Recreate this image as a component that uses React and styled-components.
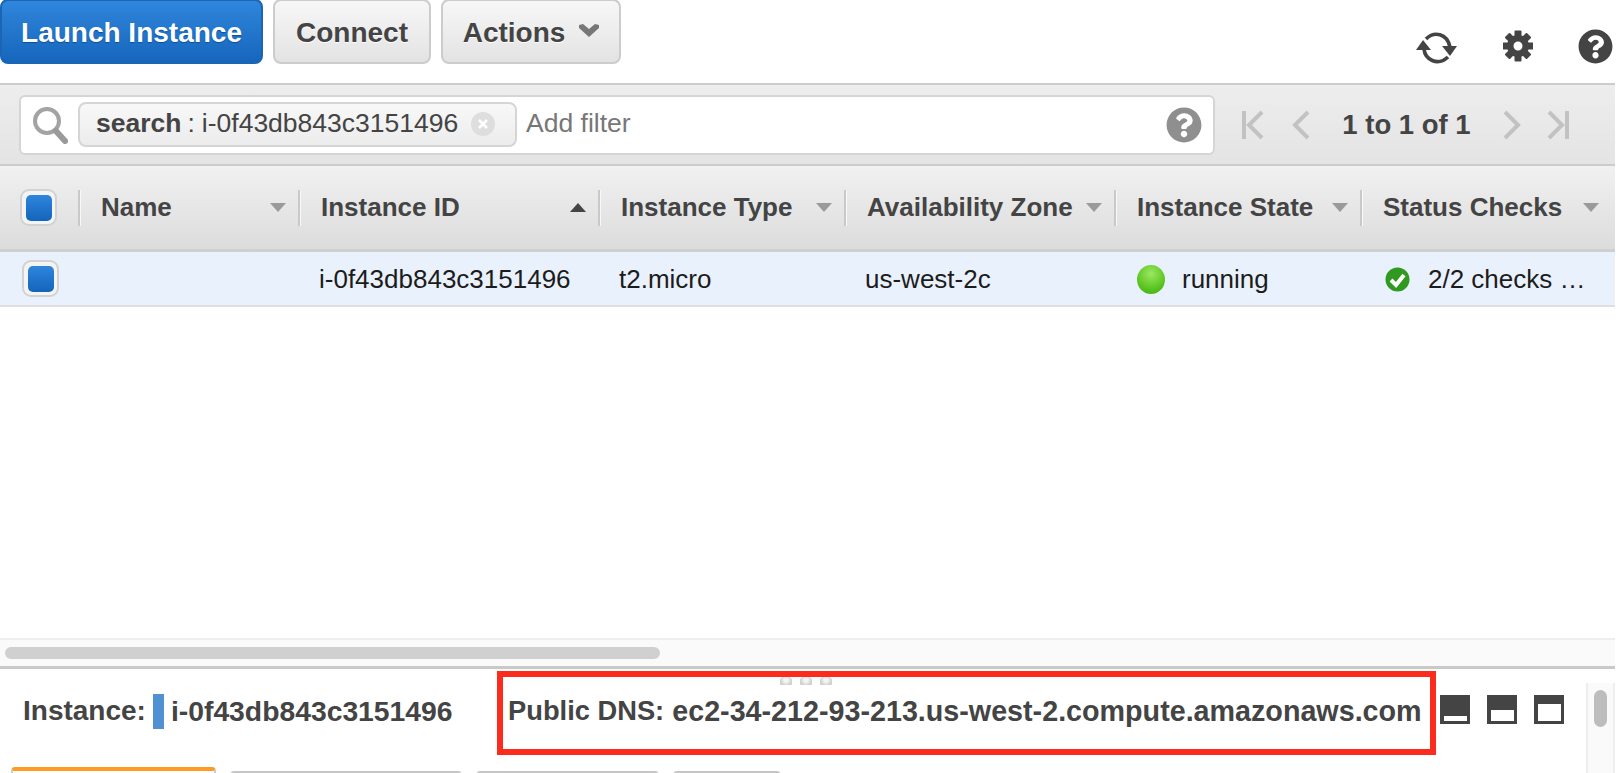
import React from 'react';
import styled, { createGlobalStyle } from 'styled-components';
import { FaQuestionCircle } from 'react-icons/fa';

const Global = createGlobalStyle`
  html, body {
    margin: 0;
    background: #fff;
    overflow: hidden;
    font-family: "Liberation Sans", Arial, sans-serif;
  }
  * { box-sizing: border-box; }
`;

const Page = styled.div`
  width: 1615px;
  height: 773px;
  display: flex;
  flex-direction: column;
  overflow: hidden;
  position: relative;
`;

const TopBar = styled.div`
  height: 83px;
  flex: none;
  display: flex;
  align-items: flex-start;
  gap: 10px;
`;

const Button = styled.div`
  height: 65px;
  width: ${p => p.$w}px;
  margin-top: -1px;
  padding-top: 2px;
  display: flex;
  align-items: center;
  justify-content: center;
  gap: 14px;
  border-radius: 8px;
  font-size: 28px;
  font-weight: 700;
  color: ${p => (p.$primary ? '#fff' : '#444')};
  text-shadow: ${p => (p.$primary ? '0 1px 1px #0d4f96' : '0 1px 0 #fff')};
  border: 2px solid ${p => (p.$primary ? '#1a66b5' : '#ccc')};
  background: ${p => (p.$primary ? 'linear-gradient(#2f86dc, #1666bc)' : 'linear-gradient(#f7f7f7, #e3e3e3)')};
`;

const Chevron = styled.svg`
  width: 20px;
  height: 13px;
  margin-bottom: 5px;
`;

const TopIcons = styled.div`
  margin-left: auto;
  margin-top: 30px;
  margin-right: 2px;
  display: flex;
  align-items: flex-start;
  color: #444;
`;

const TopIcon = styled.span`
  display: flex;
  margin-left: ${p => p.$gap || 0}px;
  margin-top: ${p => p.$top || 0}px;
`;

const FilterBar = styled.div`
  height: 83px;
  flex: none;
  display: flex;
  align-items: center;
  padding: 0 0 0 19px;
  border-top: 2px solid #ccc;
  border-bottom: 2px solid #ccc;
  background: linear-gradient(#ededed, #e4e4e4);
`;

const SearchBox = styled.div`
  width: 1196px;
  height: 60px;
  display: flex;
  align-items: center;
  padding: 0 11px 0 11px;
  background: #fff;
  border: 2px solid #d5d5d5;
  border-radius: 6px;
`;

const Chip = styled.div`
  height: 45px;
  width: 439px;
  margin-left: 10px;
  display: flex;
  align-items: center;
  padding: 0 20px 2px 16px;
  border: 2px solid #d5d5d5;
  border-radius: 8px;
  background: linear-gradient(#f8f8f8, #ececec);
  font-size: 26.5px;
  color: #444;
  white-space: nowrap;
`;

const ChipSep = styled.span`
  margin: 0 7px 0 6px;
`;

const ChipClose = styled.span`
  width: 24px;
  height: 24px;
  margin-left: auto;
  border-radius: 50%;
  background: #dedede;
  display: flex;
  align-items: center;
  justify-content: center;
`;

const AddFilter = styled.span`
  margin: 0 0 2px 9px;
  font-size: 26.5px;
  color: #777;
`;

const FilterHelp = styled.span`
  margin-left: auto;
  display: flex;
  color: #8f8f8f;
`;

const Pager = styled.div`
  display: flex;
  align-items: center;
  margin-left: 26px;
  color: #c2c2c2;
`;

const PagerText = styled.span`
  font-size: 27.5px;
  font-weight: 700;
  color: #444;
  width: 193px;
  text-align: center;
  white-space: nowrap;
`;

const PagerIcon = styled.svg`
  width: ${p => p.$w}px;
  height: 30px;
  margin-right: ${p => p.$mr || 0}px;
  fill: none;
  stroke: currentColor;
  stroke-width: 4;
`;

const columns = '78px 220px 300px 246px 270px 246px 251px';

const HeaderRow = styled.div`
  height: 86px;
  flex: none;
  display: grid;
  grid-template-columns: ${columns};
  border-bottom: 3px solid #cfcfcf;
  background: linear-gradient(#f1f1f1, #dcdcdc);
  align-items: center;
`;

const CheckCell = styled.div`
  height: 100%;
  display: flex;
  align-items: center;
  padding-left: ${p => p.$pl}px;
`;

const CheckBox = styled.span`
  width: 37px;
  height: 37px;
  display: flex;
  align-items: center;
  justify-content: center;
  border: 2px solid #d2d2d2;
  border-radius: 9px;
  background: #f4f4f4;
`;

const CheckFill = styled.span`
  width: 26px;
  height: 26px;
  border-radius: 5px;
  background: linear-gradient(#2f85dc, #1464bb);
`;

const HeadCell = styled.div`
  height: 36px;
  display: flex;
  align-items: center;
  justify-content: space-between;
  padding: 0 12px 0 21px;
  border-left: 2px solid #c9c9c9;
  box-shadow: inset 1px 0 0 #f8f8f8;
  font-size: 26px;
  font-weight: 700;
  color: #444;
  white-space: nowrap;
`;

const Caret = styled.span`
  width: 0;
  height: 0;
  border-left: 8px solid transparent;
  border-right: 8px solid transparent;
  ${p => (p.$up ? 'border-bottom: 9px solid #444;' : 'border-top: 9px solid #9a9a9a;')}
`;

const DataRow = styled.div`
  height: 55px;
  flex: none;
  display: grid;
  grid-template-columns: ${columns};
  align-items: center;
  background: #e9f1fc;
  border-bottom: 2px solid #dfdfdf;
`;

const Cell = styled.div`
  display: flex;
  align-items: center;
  min-width: 0;
  padding-left: ${p => p.$pl}px;
  padding-top: 1px;
  font-size: 26px;
  color: #1c1c1c;
  white-space: nowrap;
`;

const StatusDot = styled.span`
  width: 28px;
  height: 29px;
  flex: none;
  margin-right: 17px;
  border-radius: 50%;
  background: radial-gradient(circle at 50% 30%, #9be85e, #52bf1a 70%, #3fa40f);
`;

const CheckIcon = styled.svg`
  width: 25px;
  height: 25px;
  flex: none;
  margin-right: 18px;
`;

const Spacer = styled.div`
  flex: 1;
`;

const HScroll = styled.div`
  height: 31px;
  flex: none;
  padding: 7px 955px 7px 5px;
  background: #fafafa;
  border-top: 2px solid #eee;
  border-bottom: 3px solid #c9c9c9;
  display: flex;
`;

const HThumb = styled.div`
  flex: 1;
  border-radius: 8px;
  background: #d0d0d0;
`;

const DetailPanel = styled.div`
  height: 104px;
  flex: none;
  display: flex;
  position: relative;
`;

const DetailMain = styled.div`
  flex: 1;
  display: flex;
  flex-direction: column;
`;

const InfoRow = styled.div`
  height: 98px;
  flex: none;
  display: flex;
  align-items: flex-start;
  padding: 2px 0 0 23px;
`;

const Label = styled.span`
  font-size: ${p => p.$size}px;
  font-weight: 700;
  color: #444;
  white-space: nowrap;
`;

const InstanceInfo = styled.div`
  width: 474px;
  height: 84px;
  padding-bottom: 4px;
  display: flex;
  align-items: center;
`;

const ColorBar = styled.span`
  width: 11px;
  height: 35px;
  margin: 0 7px;
  background: #4f91d3;
`;

const DnsBox = styled.div`
  width: 939px;
  height: 84px;
  display: flex;
  align-items: center;
  gap: 8px;
  padding: 0 0 4px 5px;
  border: 6px solid #fb2b1e;
`;

const PanelIcons = styled.div`
  display: flex;
  gap: 17px;
  margin: 24px 0 0 4px;
`;

const PanelIcon = styled.span`
  width: 30px;
  height: 29px;
  background: #444;
  display: flex;
  align-items: flex-end;
  justify-content: center;
  padding-bottom: 3px;
`;

const PanelPane = styled.span`
  width: 23px;
  height: ${p => p.$h}px;
  background: #fff;
`;

const Tabs = styled.div`
  display: flex;
  align-items: flex-start;
  gap: 14px;
  padding-left: 11px;
`;

const Tab = styled.div`
  width: ${p => p.$w}px;
  height: 12px;
  flex: none;
  margin-top: ${p => (p.$active ? 0 : 4)}px;
  border-radius: 4px 4px 0 0;
  border: 2px solid #ccc;
  border-top: ${p => (p.$active ? '4px solid #ff9a22' : '2px solid #c6c6c6')};
  background: ${p => (p.$active ? '#fff' : '#f4f4f4')};
`;

const VTrack = styled.div`
  width: 29px;
  margin-top: 14px;
  padding: 7px 6px 0;
  background: #fafafa;
  border-left: 2px solid #eee;
  border-right: 2px solid #eee;
`;

const VThumb = styled.div`
  height: 37px;
  border-radius: 8px;
  background: #bdbdbd;
`;

const Handle = styled.div`
  position: absolute;
  top: 8px;
  left: 780px;
  display: flex;
  gap: 8px;
`;

const HandleDot = styled.span`
  width: 12px;
  height: 8px;
  border-radius: 4px 4px 1px 1px;
  background: radial-gradient(circle at 50% 40%, #f4f4f4 25%, #d0d0d0 70%);
`;

function RefreshIcon() {
  return (
    <svg width="41" height="33" viewBox="0 0 41 33" fill="none" stroke="#444" strokeWidth="3.6">
      <path d="M8 17 C9 27 21 35 32 25" />
      <path d="M10 7 C18 -1 31 1 34 15" />
      <path d="M7 8 L0 18 L15 18 Z" fill="#444" stroke="none" />
      <path d="M34 24 L26 14 L41 14 Z" fill="#444" stroke="none" />
    </svg>
  );
}

function GearIcon() {
  const angles = [0, 45, 90, 135, 180, 225, 270, 315];
  return (
    <svg width="30" height="32" viewBox="-15 -16 30 32" fill="#444">
      {angles.map(a => (
        <rect key={a} x="-3.5" y="-15.5" width="7" height="8" rx="1" transform={`rotate(${a})`} />
      ))}
      <path fillRule="evenodd" d="M0 -11 A11 11 0 1 1 0 11 A11 11 0 1 1 0 -11 Z M0 -4.5 A4.5 4.5 0 1 0 0 4.5 A4.5 4.5 0 1 0 0 -4.5 Z" />
    </svg>
  );
}

function SearchIcon() {
  return (
    <svg width="36" height="38" viewBox="0 0 36 38" fill="none">
      <circle cx="15" cy="15" r="12" stroke="#a3a3a3" strokeWidth="4" />
      <path d="M24 25 L33 35" stroke="#9a9a9a" strokeWidth="6" strokeLinecap="round" />
    </svg>
  );
}

const COLS = [
  { name: 'Name' },
  { name: 'Instance ID', up: true },
  { name: 'Instance Type' },
  { name: 'Availability Zone' },
  { name: 'Instance State' },
  { name: 'Status Checks' },
];

export default function App() {
  return (
    <Page>
      <Global />
      <TopBar>
        <Button $primary $w={263}>Launch Instance</Button>
        <Button $w={158}>Connect</Button>
        <Button $w={180}>
          Actions
          <Chevron viewBox="0 0 20 13">
            <path d="M0 1 L4 0 L10 5 L16 0 L20 1 L20 4 L10 13 L0 4 Z" fill="#777" />
          </Chevron>
        </Button>
        <TopIcons>
          <TopIcon $top={2}><RefreshIcon /></TopIcon>
          <TopIcon $gap={46}><GearIcon /></TopIcon>
          <TopIcon $gap={45} $top={-1}><FaQuestionCircle size={35} /></TopIcon>
        </TopIcons>
      </TopBar>

      <FilterBar>
        <SearchBox>
          <SearchIcon />
          <Chip>
            <b>search</b>
            <ChipSep>:</ChipSep>
            i-0f43db843c3151496
            <ChipClose>
              <svg width="12" height="12" viewBox="0 0 12 12">
                <path d="M2 2 L10 10 M10 2 L2 10" stroke="#fff" strokeWidth="2.5" />
              </svg>
            </ChipClose>
          </Chip>
          <AddFilter>Add filter</AddFilter>
          <FilterHelp><FaQuestionCircle size={36} /></FilterHelp>
        </SearchBox>
        <Pager>
          <PagerIcon $w={24} $mr={27} viewBox="0 0 24 30">
            <path d="M3 1 V29 M21 2 L8 15 L21 28" />
          </PagerIcon>
          <PagerIcon $w={18} viewBox="0 0 18 30">
            <path d="M16 2 L3 15 L16 28" />
          </PagerIcon>
          <PagerText>1 to 1 of 1</PagerText>
          <PagerIcon $w={18} $mr={25} viewBox="0 0 18 30">
            <path d="M2 2 L15 15 L2 28" />
          </PagerIcon>
          <PagerIcon $w={24} viewBox="0 0 24 30">
            <path d="M21 1 V29 M3 2 L16 15 L3 28" />
          </PagerIcon>
        </Pager>
      </FilterBar>

      <HeaderRow>
        <CheckCell $pl={20}><CheckBox><CheckFill /></CheckBox></CheckCell>
        {COLS.map(col => (
          <HeadCell key={col.name}>
            {col.name}
            <Caret $up={col.up} />
          </HeadCell>
        ))}
      </HeaderRow>

      <DataRow>
        <CheckCell $pl={22}><CheckBox><CheckFill /></CheckBox></CheckCell>
        <Cell />
        <Cell $pl={21}>i-0f43db843c3151496</Cell>
        <Cell $pl={21}>t2.micro</Cell>
        <Cell $pl={21}>us-west-2c</Cell>
        <Cell $pl={23}><StatusDot />running</Cell>
        <Cell $pl={25}>
          <CheckIcon viewBox="0 0 25 25">
            <circle cx="12.5" cy="12.5" r="12" fill="#2f9a1f" />
            <path d="M6 13 L11 18 L19 8" fill="none" stroke="#fff" strokeWidth="4" />
          </CheckIcon>
          2/2 checks …
        </Cell>
      </DataRow>

      <Spacer />

      <HScroll><HThumb /></HScroll>

      <DetailPanel>
        <DetailMain>
          <InfoRow>
            <InstanceInfo>
              <Label $size={28}>Instance:</Label>
              <ColorBar />
              <Label $size={28.3}>i-0f43db843c3151496</Label>
            </InstanceInfo>
            <DnsBox>
              <Label $size={27.3}>Public DNS:</Label>
              <Label $size={28.7}>ec2-34-212-93-213.us-west-2.compute.amazonaws.com</Label>
            </DnsBox>
            <PanelIcons>
              <PanelIcon><PanelPane $h={5} /></PanelIcon>
              <PanelIcon><PanelPane $h={11} /></PanelIcon>
              <PanelIcon><PanelPane $h={17} /></PanelIcon>
            </PanelIcons>
          </InfoRow>
          <Tabs>
            <Tab $active $w={205} />
            <Tab $w={232} />
            <Tab $w={183} />
            <Tab $w={108} />
          </Tabs>
        </DetailMain>
        <VTrack><VThumb /></VTrack>
        <Handle><HandleDot /><HandleDot /><HandleDot /></Handle>
      </DetailPanel>
    </Page>
  );
}
